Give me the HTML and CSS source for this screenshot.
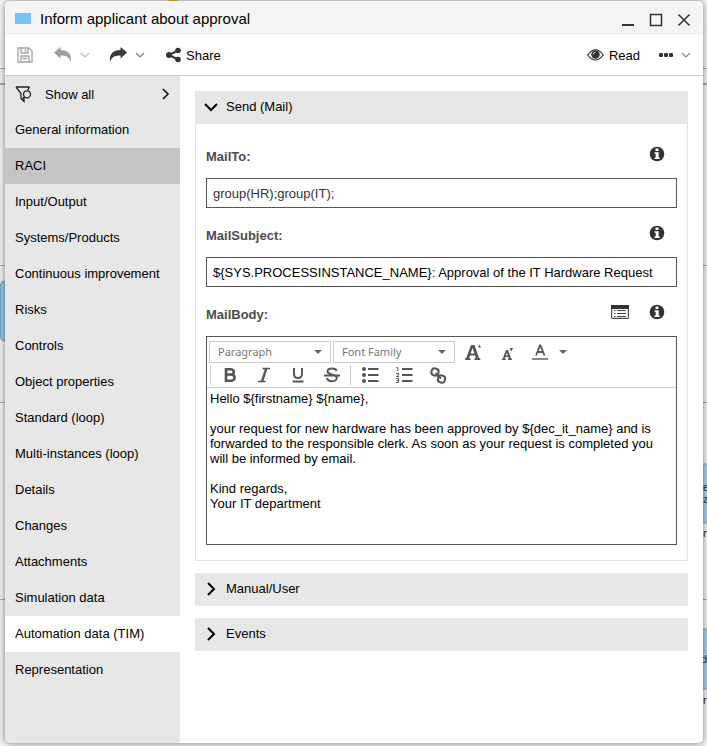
FILE: index.html
```html
<!DOCTYPE html>
<html lang="en">
<head>
<meta charset="utf-8">
<title>Inform applicant about approval</title>
<link rel="stylesheet" href="styles.css">
</head>
<body>
<svg class="canvas" aria-hidden="true">
  <rect width="100%" height="28" fill="#f4f4f4"/>
  <rect x="168" y="-8" width="11" height="9" rx="2" fill="#fbb92f"/>
  <path d="M0 68.500H800M0 265.500H800M0 402.500H800M0 599.500H800" stroke="#aaa"/>
  <path d="M0 84H800" stroke="#aaa" stroke-width="2"/>
  <rect x="0.500" y="281" width="80" height="60" rx="4" fill="#94cbec" stroke="#6fa5c8"/>
  <rect x="620" y="464" width="120" height="59" fill="#9fd3f2" stroke="#79aaca"/>
  <rect x="620" y="629" width="120" height="60" fill="#9fd3f2" stroke="#79aaca"/>
  <g class="canvas-text"><text x="703" y="491">e</text><text x="703" y="503">z</text><text x="703" y="537">m</text><text x="701" y="663">d</text><text x="703" y="704">n</text></g>
</svg>
<div class="dialog" role="dialog" aria-labelledby="title">
  <header class="titlebar">
    <span class="swatch"></span>
    <h1 id="title">Inform applicant about approval</h1>
    <button class="win" aria-label="Minimize"><svg width="14" height="14" viewBox="0 0 14 14"><path d="M1 12H13" stroke="#333" stroke-width="2"/></svg></button>
    <button class="win" aria-label="Maximize"><svg width="14" height="14" viewBox="0 0 14 14"><rect x="1.500" y="1.500" width="11" height="11" fill="none" stroke="#333" stroke-width="1.500"/></svg></button>
    <button class="win" aria-label="Close"><svg width="14" height="14" viewBox="0 0 14 14"><path d="M1.500 1.500L12.500 12.500M12.500 1.500L1.500 12.500" stroke="#333" stroke-width="1.500"/></svg></button>
  </header>
  <div class="toolbar">
    <button aria-label="Save"><svg width="16" height="16" viewBox="0 0 16 16" fill="none" stroke="#a5a5a5" stroke-width="1.300"><path d="M1 1H12L15 4V15H1ZM4 1V6H11V1M4 15V9H12V15M8.500 2V5M5.500 11.500H10.500"/></svg></button>
    <button class="undo" aria-label="Undo"><svg width="18" height="16" viewBox="0 0 18 16"><path d="M0 5.500L6.500 0V3C14 3 18 7 17 15C15.500 10.500 13 8.500 6.500 8.500V11.500Z" fill="#a0a0a0"/></svg></button>
    <button class="drop" aria-label="Undo history"><svg width="10" height="6" viewBox="0 0 10 6"><path d="M1 1L5 5L9 1" fill="none" stroke="#bbb" stroke-width="1.200"/></svg></button>
    <button class="redo" aria-label="Redo"><svg width="18" height="16" viewBox="0 0 18 16"><path d="M18 5.500L11.500 0V3C4 3 0 7 1 15C2.500 10.500 5 8.500 11.500 8.500V11.500Z" fill="#3a3a3a"/></svg></button>
    <button class="drop" aria-label="Redo history"><svg width="10" height="6" viewBox="0 0 10 6"><path d="M1 1L5 5L9 1" fill="none" stroke="#777" stroke-width="1.200"/></svg></button>
    <button class="share"><svg width="15" height="16" viewBox="0 0 15 16" fill="#333"><path d="M12 3.500L3 8L12 12.500" fill="none" stroke="#333" stroke-width="2"/><circle cx="3" cy="8" r="3"/><circle cx="12" cy="3.500" r="2.800"/><circle cx="12" cy="12.500" r="2.800"/></svg>Share</button>
    <button class="read"><svg width="17" height="12" viewBox="0 0 17 12"><path d="M.7 6Q8.500-4.500 16.300 6Q8.500 16 .7 6Z" fill="#fff" stroke="#333" stroke-width="1.200"/><circle cx="8.500" cy="5.500" r="4.200" fill="#333"/><path d="M6.300 5.500A2.300 2.300 0 0 1 8.500 3.200" fill="none" stroke="#ddd"/></svg>Read</button>
    <button class="more" aria-label="More"><svg width="14" height="4" viewBox="0 0 14 4" fill="#333"><rect width="4" height="4" rx="1"/><rect x="5" width="4" height="4" rx="1"/><rect x="10" width="4" height="4" rx="1"/></svg></button>
    <button class="drop" aria-label="More options"><svg width="10" height="6" viewBox="0 0 10 6"><path d="M1 1L5 5L9 1" fill="none" stroke="#888" stroke-width="1.200"/></svg></button>
  </div>
  <div class="content">
    <nav>
      <button class="showall"><svg width="18" height="17" viewBox="0 0 18 17" fill="none" stroke="#222" stroke-width="1.300"><path d="M1 1H14.500M1 1L6 7.500V12.500L9 15.500V12M14.500 1L12.500 4.500"/><circle cx="12" cy="8.300" r="3.500"/><path d="M9.500 10.800L7.500 13"/></svg><span>Show all</span><svg width="8" height="12" viewBox="0 0 8 12"><path d="M1 1L6 6L1 11" fill="none" stroke="#111" stroke-width="1.600"/></svg></button>
      <a href="#">General information</a>
      <a href="#" class="hover">RACI</a>
      <a href="#">Input/Output</a>
      <a href="#">Systems/Products</a>
      <a href="#">Continuous improvement</a>
      <a href="#">Risks</a>
      <a href="#">Controls</a>
      <a href="#">Object properties</a>
      <a href="#">Standard (loop)</a>
      <a href="#">Multi-instances (loop)</a>
      <a href="#">Details</a>
      <a href="#">Changes</a>
      <a href="#">Attachments</a>
      <a href="#">Simulation data</a>
      <a href="#" class="active" aria-current="page">Automation data (TIM)</a>
      <a href="#">Representation</a>
    </nav>
    <main>
      <section>
        <button class="bar" aria-expanded="true"><svg width="14" height="14" viewBox="0 0 14 14"><path d="M1 4L7 10L13 4" fill="none" stroke="#000" stroke-width="2"/></svg>Send (Mail)</button>
        <div class="panel">
          <div class="field">
            <div class="head"><label for="to">MailTo:</label><button aria-label="Info"><svg width="16" height="16" viewBox="0 0 16 16"><circle cx="8" cy="8" r="7.300" fill="#333"/><path d="M6.500 2.500H9.500V5H6.500ZM5.500 6.300H9.700V11.500H10.700V13H5.500V11.500H6.700V7.800H5.500Z" fill="#fff"/></svg></button></div>
            <input id="to" class="muted" type="text" value="group(HR);group(IT);">
          </div>
          <div class="field">
            <div class="head"><label for="subject">MailSubject:</label><button aria-label="Info"><svg width="16" height="16" viewBox="0 0 16 16"><circle cx="8" cy="8" r="7.300" fill="#333"/><path d="M6.500 2.500H9.500V5H6.500ZM5.500 6.300H9.700V11.500H10.700V13H5.500V11.500H6.700V7.800H5.500Z" fill="#fff"/></svg></button></div>
            <input id="subject" type="text" value="${SYS.PROCESSINSTANCE_NAME}: Approval of the IT Hardware Request">
          </div>
          <div class="field">
            <div class="head"><label for="mailbody">MailBody:</label><button aria-label="Insert attribute"><svg width="18" height="14" viewBox="0 0 18 14"><rect x=".6" y=".6" width="16.800" height="12.800" rx="1" fill="#fff" stroke="#445460" stroke-width="1.200"/><path d="M0 0H18V4H0Z" fill="#333"/><path d="M6 5.500H15M6 8.500H15M6 11.500H15M3 5.500H4.500M3 8.500H4.500M3 11.500H4.500" stroke="#444"/></svg></button><button aria-label="Info"><svg width="16" height="16" viewBox="0 0 16 16"><circle cx="8" cy="8" r="7.300" fill="#333"/><path d="M6.500 2.500H9.500V5H6.500ZM5.500 6.300H9.700V11.500H10.700V13H5.500V11.500H6.700V7.800H5.500Z" fill="#fff"/></svg></button></div>
            <div class="editor">
              <div class="tools">
                <div class="row">
                  <div class="select"><select aria-label="Paragraph format"><option>Paragraph</option></select><svg width="8" height="4" viewBox="0 0 8 4"><path d="M0 0H8L4 4Z" fill="#666"/></svg></div>
                  <div class="select"><select aria-label="Font family"><option>Font Family</option></select><svg width="8" height="4" viewBox="0 0 8 4"><path d="M0 0H8L4 4Z" fill="#666"/></svg></div>
                  <button class="tool" aria-label="Increase font size"><svg width="18" height="18" viewBox="0 0 18 18"><path d="M0 17V15.500L1.300 15L6 2H9.500L14 15L15.300 15.500V17H9.500V15.500L10.800 15L10 12.500H5L4.200 15L5.500 15.500V17ZM5.600 10.500H9.400L7.500 5ZM13 4.500L14.500 1.500L16 4.500Z" fill="#555" fill-rule="evenodd"/></svg></button>
                  <button class="tool" aria-label="Decrease font size"><svg width="18" height="18" viewBox="0 0 18 18"><path d="M3 17V16L3.800 15.600L7 7H9L12 15.600L13 16V17H9V16L9.800 15.600L9.300 14H6.300L5.800 15.600L6.800 16V17ZM6.800 12.500H8.900L7.900 9.500ZM10.500 5H14L12.300 8.500Z" fill="#555" fill-rule="evenodd"/></svg></button>
                  <button class="tool" aria-label="Text color"><svg width="18" height="18" viewBox="0 0 18 18" fill="none" stroke="#555"><path d="M3 12.500L7 2.500H7.500L11.500 12.500M4.500 9H10.500" stroke-width="1.800"/><path d="M-1 16H15" stroke-width="2" stroke="#888"/></svg></button>
                  <button aria-label="Text color options"><svg width="8" height="4" viewBox="0 0 8 4"><path d="M0 0H8L4 4Z" fill="#666"/></svg></button>
                </div>
                <div class="row format">
                  <i class="sep"></i>
                  <button class="tool" aria-label="Bold"><svg width="18" height="18" viewBox="0 0 18 18"><path d="M5 3.200H9C14.500 3.200 13.500 8.500 10 8.500H5M5 8.500H9.500C15 8.500 15 14.800 9.500 14.800H5M5 2V16" fill="none" stroke="#555" stroke-width="2.600"/></svg></button>
                  <button class="tool" aria-label="Italic"><svg width="18" height="18" viewBox="0 0 18 18"><path d="M7.500 2.500H15M3 15.500H10.500" fill="none" stroke="#555" stroke-width="1.500"/><path d="M11.300 2.500L7 15.500" stroke="#555" stroke-width="2.400"/></svg></button>
                  <button class="tool" aria-label="Underline"><svg width="18" height="18" viewBox="0 0 18 18"><path d="M5 2V8Q5 12 9 12T13 8V2M3.500 15.500H14.500" fill="none" stroke="#555" stroke-width="1.900"/></svg></button>
                  <button class="tool" aria-label="Strikethrough"><svg width="18" height="18" viewBox="0 0 18 18"><path d="M13.500 5Q13 2.500 9 2.500Q4.500 2.500 4.500 5.500C4.500 9 13.800 8 13.800 12Q13.500 15.200 9 15.200Q4.500 15.200 4 12M1 9.500H17" fill="none" stroke="#555" stroke-width="1.900"/></svg></button>
                  <i class="sep"></i>
                  <button class="tool" aria-label="Bulleted list"><svg width="18" height="18" viewBox="0 0 18 18" fill="#555"><circle cx="3" cy="3" r="2"/><circle cx="3" cy="9" r="2"/><circle cx="3" cy="15" r="2"/><path d="M7 3H17.500M7 9H17.500M7 15H17.500" stroke="#555" stroke-width="2"/></svg></button>
                  <button class="tool" aria-label="Numbered list"><svg width="18" height="18" viewBox="0 0 18 18" fill="none" stroke="#555"><path d="M7 3H17.500M7 9H17.500M7 15H17.500" stroke-width="2"/><path d="M1.500 1.500H2.800V5M1 7.500H3.500V9L1.500 10.500H4M1 12.500H3.500V16.500H1M1.500 14.500H3.500"/></svg></button>
                  <button class="tool" aria-label="Insert link"><svg width="18" height="18" viewBox="0 0 18 18" fill="none" stroke="#555" stroke-width="2"><rect x="2.500" y="2.500" width="7" height="7" rx="3" transform="rotate(15 6 6)"/><rect x="9" y="9.500" width="7" height="7" rx="3" transform="rotate(15 12.500 13)"/><path d="M6.500 7L12 12.500"/></svg></button>
                </div>
              </div>
              <textarea id="mailbody" spellcheck="false">Hello ${firstname} ${name},

your request for new hardware has been approved by ${dec_it_name} and is forwarded to the responsible clerk. As soon as your request is completed you will be informed by email.

Kind regards,
Your IT department</textarea>
            </div>
          </div>
        </div>
      </section>
      <button class="bar" aria-expanded="false"><svg width="14" height="14" viewBox="0 0 14 14"><path d="M4 1L10 7L4 13" fill="none" stroke="#000" stroke-width="2"/></svg>Manual/User</button>
      <button class="bar" aria-expanded="false"><svg width="14" height="14" viewBox="0 0 14 14"><path d="M4 1L10 7L4 13" fill="none" stroke="#000" stroke-width="2"/></svg>Events</button>
    </main>
  </div>
</div>
</body>
</html>
```
FILE: styles.css
```css
* { box-sizing: border-box; }
body {
  margin: 0;
  min-height: 100vh;
  padding: 1px 4px 3px 5px;
  display: flex;
  background: #f1f1f1;
  color: #000;
  font: 13px/15px "Liberation Sans", Arial, sans-serif;
}
button, input, textarea, select { font: inherit; color: inherit; margin: 0; }
button { border: 0; padding: 0; background: none; display: flex; align-items: center; }
svg { display: block; flex: none; overflow: visible; }
.canvas { position: absolute; inset: 0; width: 100%; height: 100%; overflow: hidden; }
.canvas-text { font-size: 11px; fill: #333; }
.dialog {
  position: relative;
  flex: 1;
  min-width: 0;
  display: flex;
  flex-direction: column;
  background: #fff;
  border-radius: 5px;
  overflow: hidden;
  box-shadow: 0 0 6px rgba(0, 0, 0, .5);
}
.titlebar {
  height: 34px;
  padding: 2px 12px 0 10px;
  display: flex;
  align-items: center;
  background: #f4f4f4;
}
.swatch { width: 16px; height: 11px; margin-bottom: 2px; background: #74c5f6; }
h1 { flex: 1; margin: 0 0 0 9px; font-size: 15px; line-height: 18px; font-weight: normal; }
.win { margin: 2px 0 0 14px; }
.toolbar {
  height: 41px;
  padding: 0 12px;
  display: flex;
  align-items: center;
  border-bottom: 1px solid #ccc;
}
.undo { margin-left: 21px; }
.redo { margin-left: 19px; }
.drop { margin-left: 8px; }
.share { margin-left: 21px; gap: 5px; }
.read { margin-left: auto; gap: 5px; }
.more { margin-left: 19px; }
.content { flex: 1; display: flex; }
nav { width: 175px; flex: none; background: #e7e7e7; }
nav a, .showall {
  display: flex;
  align-items: center;
  width: 100%;
  height: 36px;
  padding: 0 10px 2px;
  color: #000;
  text-decoration: none;
}
.showall { padding-bottom: 0; }
.showall span { flex: 1; margin-left: 12px; text-align: left; }
.hover { background: #c5c5c5; }
.active { background: #fff; }
main {
  flex: 1;
  min-width: 0;
  padding: 15px;
  display: flex;
  flex-direction: column;
  gap: 12px;
}
.bar { width: 100%; height: 33px; padding: 0 9px 2px; gap: 8px; background: #e7e7e7; }
.panel {
  padding: 10px 10px 15px;
  border: 1px solid #e3e3e3;
  border-top: 0;
  display: flex;
  flex-direction: column;
  gap: 5px;
}
.head { height: 44px; padding-right: 12px; display: flex; align-items: center; gap: 20px; }
.head label { flex: 1; font-weight: bold; color: #4c4c4c; }
.head button { margin-bottom: 4px; }
input {
  display: block;
  width: 100%;
  height: 30px;
  padding: 0 6px;
  border: 1px solid #555;
  border-radius: 0;
  background: #fff;
}
.muted { color: #333; }
.editor { border: 1px solid #555; }
.tools { padding: 4px 2px 0; border-bottom: 1px solid #ccc; }
.row { display: flex; align-items: center; height: 22px; }
.select { position: relative; width: 122px; height: 22px; margin-right: 2px; }
.select select {
  appearance: none;
  width: 100%;
  height: 100%;
  padding: 0 8px 2px;
  border: 1px solid #ccc;
  border-radius: 0;
  background: #fff;
  color: #777;
  font: 11px "Noto Sans", sans-serif;
}
.select svg { position: absolute; right: 9px; top: 9px; pointer-events: none; }
.tool { width: 34px; justify-content: center; }
.row > .tool { flex: none; }
.format { height: 24px; }
.sep { width: 1px; height: 20px; margin: 0 2px 0 1px; background: #ccc; }
textarea {
  display: block;
  width: 100%;
  height: 156px;
  padding: 3px;
  border: 0;
  resize: none;
  outline: 0;
  background: #fff;
}
```
